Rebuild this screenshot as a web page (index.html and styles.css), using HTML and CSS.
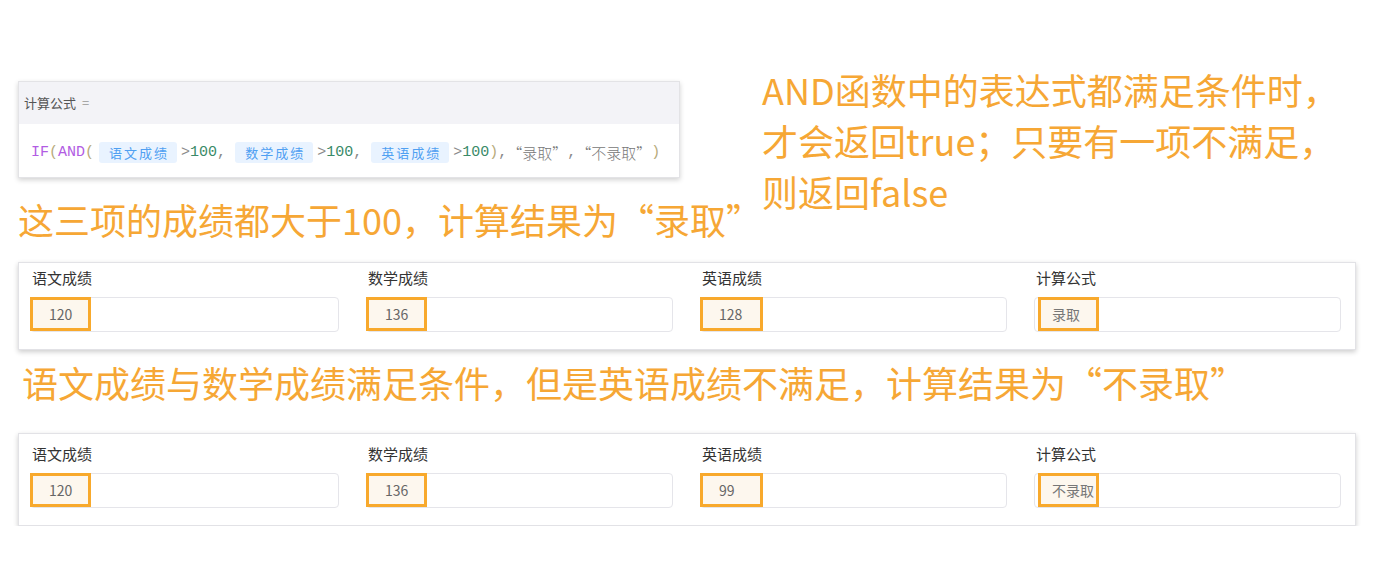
FILE: index.html
```html
<!DOCTYPE html>
<html lang="zh-CN">
<head>
<meta charset="utf-8">
<title>AND函数</title>
<link rel="stylesheet" href="styles.css">
</head>
<body>
<div class="page">
  <div class="top">
    <div class="top-left">
      <div class="formula-card">
        <div class="formula-head">计算公式 <span class="eq">=</span></div>
        <div class="formula-body">
          <span class="fn">IF</span><span class="paren">(</span><span class="fn">AND</span><span class="paren">(</span><span class="pill">语文成绩</span><span class="op">&gt;</span><span class="num">100</span><span class="op">,</span><span class="pill">数学成绩</span><span class="op">&gt;</span><span class="num">100</span><span class="op">,</span><span class="pill">英语成绩</span><span class="op">&gt;</span><span class="num">100</span><span class="paren">)</span><span class="op">,</span><span class="str">“录取”</span><span class="op">,</span><span class="str">“不录取”</span><span class="paren">)</span>
        </div>
      </div>
      <p class="note note-a">这三项的成绩都大于100，计算结果为“录取”</p>
    </div>
    <p class="note note-right">AND函数中的表达式都满足条件时，<br>才会返回true；只要有一项不满足，<br>则返回false</p>
  </div>

  <div class="fields fields-1">
    <div class="field">
      <div class="label">语文成绩</div>
      <div class="input"><span class="hl">120</span></div>
    </div>
    <div class="field">
      <div class="label">数学成绩</div>
      <div class="input"><span class="hl">136</span></div>
    </div>
    <div class="field">
      <div class="label">英语成绩</div>
      <div class="input"><span class="hl hl-wide">128</span></div>
    </div>
    <div class="field">
      <div class="label">计算公式</div>
      <div class="input"><span class="hl hl-inset">录取</span></div>
    </div>
  </div>

  <p class="note note-b">语文成绩与数学成绩满足条件，但是英语成绩不满足，计算结果为“不录取”</p>

  <div class="fields fields-2">
    <div class="field">
      <div class="label">语文成绩</div>
      <div class="input"><span class="hl">120</span></div>
    </div>
    <div class="field">
      <div class="label">数学成绩</div>
      <div class="input"><span class="hl">136</span></div>
    </div>
    <div class="field">
      <div class="label">英语成绩</div>
      <div class="input"><span class="hl hl-wide">99</span></div>
    </div>
    <div class="field">
      <div class="label">计算公式</div>
      <div class="input"><span class="hl hl-inset">不录取</span></div>
    </div>
  </div>
</div>
</body>
</html>
```

FILE: styles.css
```css
* { box-sizing: border-box; }

html, body {
  margin: 0;
  background: #ffffff;
}

body {
  font-family: "Noto Sans CJK SC", "Noto Sans", sans-serif;
  color: #333;
}

.page {
  padding-top: 64px;
}

.top {
  display: flex;
  align-items: flex-start;
}

.top-left {
  width: 744px;
  padding-top: 17px;
  padding-left: 18px;
}

.note {
  margin: 0;
  color: #f6a735;
  font-size: 36px;
  line-height: 50px;
  white-space: nowrap;
}

.note-right {
  margin-left: 18px;
  line-height: 51px;
  margin-top: 0;
}

.note-a {
  margin-top: 16px;
}

.note-b {
  margin: 7px 0 0 22px;
}

/* formula card */
.formula-card {
  width: 662px;
  border: 1px solid #e3e3e6;
  box-shadow: 0 2px 5px rgba(0, 0, 0, 0.18);
  background: #fff;
}

.formula-head {
  height: 42px;
  background: #f3f3f7;
  padding-left: 5px;
  font-size: 13px;
  line-height: 42px;
  color: #555;
}

.formula-head .eq {
  color: #999;
  margin-left: 3px;
}

.formula-body {
  height: 53px;
  display: flex;
  align-items: center;
  padding-left: 12px;
  padding-top: 4px;
  font-family: "Liberation Mono", "Noto Sans CJK SC", monospace;
  font-size: 15px;
  color: #888;
  white-space: nowrap;
}

.fn { color: #b25ce3; }
.paren { color: #b8ab7c; }
.op { color: #8a8a8a; }
.num { color: #3a8a68; }
.str { color: #777; font-family: "Noto Sans CJK SC", sans-serif; font-weight: 300; }

.pill {
  display: inline-block;
  height: 21px;
  line-height: 21px;
  padding: 0 8px 0 10px;
  margin: 0 4px 0 5px;
  background: #e9f3ff;
  color: #4fa0f2;
  border-radius: 3px;
  font-family: "Noto Sans CJK SC", sans-serif;
  font-size: 13px;
  letter-spacing: 2px;
}

.formula-body .op + .pill { margin-left: 9px; }

/* fields cards */
.fields {
  margin-left: 18px;
  width: 1338px;
  display: grid;
  grid-template-columns: 309px 307px 307px 307px;
  column-gap: 27px;
  padding: 6px 14px 17px 11px;
  border: 1px solid #e2e2e6;
  box-shadow: 0 2px 5px rgba(0, 0, 0, 0.2);
  background: #fff;
}

.fields-1 { margin-top: 18px; padding-top: 5px; }
.fields-2 { margin-top: 26px; padding-top: 10px; }

.label {
  font-size: 15px;
  line-height: 20px;
  color: #333;
  padding-left: 2px;
  margin-bottom: 9px;
}

.input {
  height: 35px;
  border: 1px solid #e5e5ea;
  border-radius: 4px;
  display: flex;
  align-items: flex-start;
}

.hl {
  display: block;
  width: 61px;
  height: 34px;
  margin: -1px 0 0 -1px;
  border: 3px solid #f8a92c;
  background: #fdf7ee;
  padding-left: 16px;
  font-size: 14px;
  line-height: 28px;
  color: #666;
  white-space: nowrap;
}

.hl-wide { width: 63px; }

.hl-inset {
  margin-left: 3px;
  padding-left: 11px;
  color: #777;
}
```
